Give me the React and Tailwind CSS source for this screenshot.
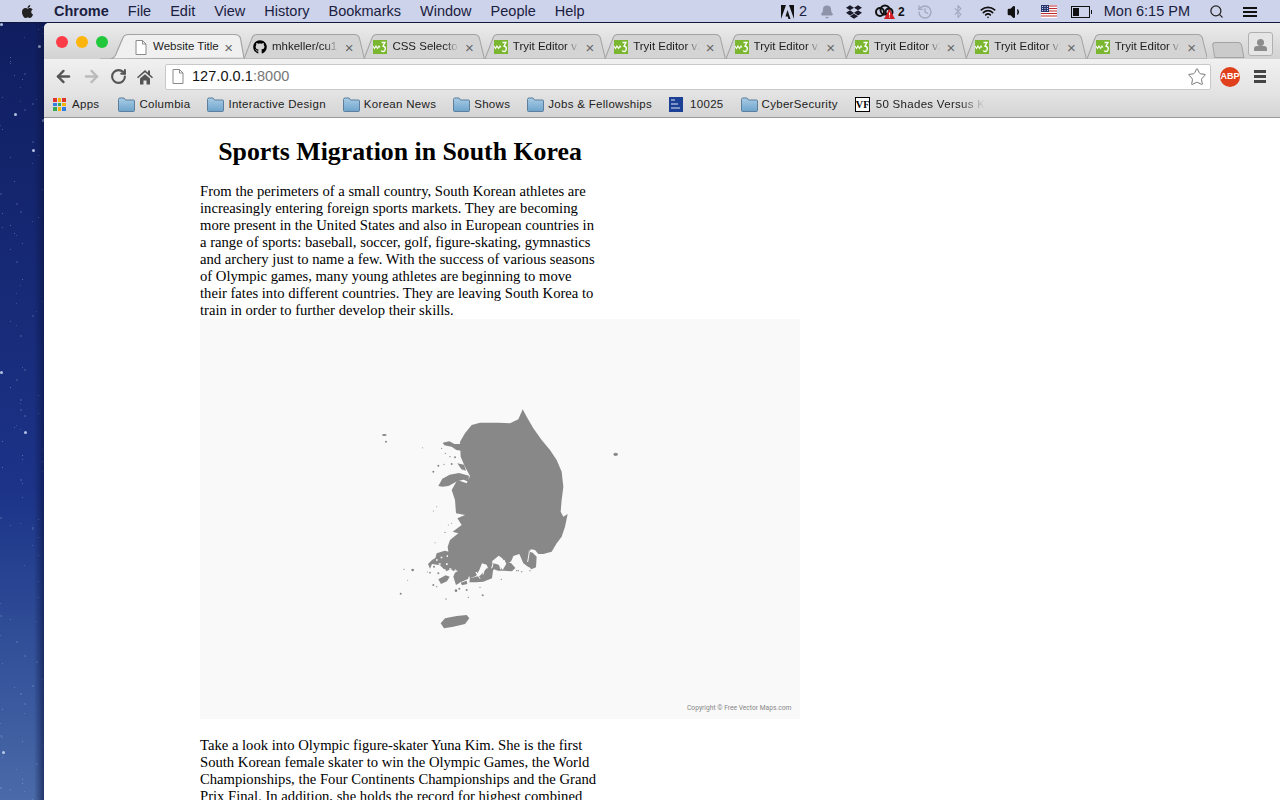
import React from 'react';
import { ArrowLeft, ArrowRight, RotateCw, Star, Search, Wifi, Volume1, Bell, Bluetooth, History } from 'lucide-react';
import { FaApple, FaGithub, FaDropbox } from 'react-icons/fa';

const menuItems = ['File', 'Edit', 'View', 'History', 'Bookmarks', 'Window', 'People', 'Help'];
const tabs = [
  { title: 'mhkeller/cu1', icon: 'gh' },
  { title: 'CSS Selector', icon: 'w3' },
  { title: 'Tryit Editor v2', icon: 'w3' },
  { title: 'Tryit Editor v2', icon: 'w3' },
  { title: 'Tryit Editor v2', icon: 'w3' },
  { title: 'Tryit Editor v2', icon: 'w3' },
  { title: 'Tryit Editor v2', icon: 'w3' },
  { title: 'Tryit Editor v2', icon: 'w3' },
];

// scattered stars for the wallpaper strip
const stars = Array.from({ length: 120 }, (_, i) => ({
  x: (i * i * 7 + i * 13) % 44,
  y: (i * 61 + i * i * 3) % 778,
  size: i % 17 === 0 ? 3 : i % 4 === 0 ? 2 : 1,
  alpha: i % 17 === 0 ? 0.85 : 0.2 + (i % 4) * 0.08,
}));

// small island specks around the coast, in map coordinates
const specks = [
  [128,510,4],[102,508,2],[92,581,3],[228,597,2],[295,592,2],[113,541,1.5],[445,512,2],[480,512,2],[394,538,2],
  [195,428,1.5],[225,397,2],[190,333,1.5],[200,320,1.5],[180,518,2.5],[172,516,1.5],[192,500,3],[205,520,3],
  [190,555,3],[200,560,2],[258,572,4],[268,566,3],[290,570,3],[338,586,3],[330,562,2],[440,512,2],[455,515,2],
  [190,215,3],[205,197,3],[222,193,2],[245,192,3],[215,145,2],[240,170,2],[226,160,2],[255,172,3],[235,375,1.5],[245,370,1.5],
];

const FileIcon = () => (
  <svg width="12" height="15" viewBox="0 0 12 15" className="shrink-0">
    <path d="M1 .5h6.500l3.500 3.500v10.500h-10z" fill="#fff" stroke="#8a8a8a" />
    <path d="M7.500 .5v3.500h3.500" fill="none" stroke="#8a8a8a" />
  </svg>
);

// w3schools favicon
const W3Icon = () => (
  <svg width="14" height="14" viewBox="0 0 14 14" className="shrink-0">
    <rect width="14" height="14" fill="#7ab62f" />
    <path d="M0 6l1.500 2.500 1.500-2.500 1.500 2.500 1.500-2.500 1 1.500" fill="none" stroke="#fff" strokeWidth="1.100" />
    <path d="M8.500 2.500h3.500l-2 3.500q2.500 .5 2.300 3 -.3 2.500-2.300 2.500 -1.300 0-1.800-1" fill="none" stroke="#fff" strokeWidth="1.300" />
  </svg>
);

const Folder = () => (
  <svg width="17" height="15" viewBox="0 0 17 15" className="shrink-0">
    <defs>
      <linearGradient id="fold" x1="0" y1="0" x2="0" y2="1">
        <stop offset="0" stopColor="#a9cde6" />
        <stop offset="1" stopColor="#6ea3cb" />
      </linearGradient>
    </defs>
    <path d="M.5 2.500q0-1.500 1.500-1.500h4l1.500 2h8q1 0 1 1v9.500q0 1-1 1h-14q-1 0-1-1z" fill="url(#fold)" stroke="#5b7f9c" />
  </svg>
);

const Tab = ({ title, icon, active }) => (
  <div className={`relative flex items-center h-[25px] shrink-0 pt-[1px] ${active ? 'w-[144px] pl-[35px] pr-[11px]' : 'w-[120.400px] pl-[9px] pr-[11px]'}`}>
    <svg className="absolute inset-0 w-full h-full" viewBox="0 0 120 25" preserveAspectRatio="none">
      {active
        ? <path d="M0 25h8q3 0 5-4l6-17q1-3.500 5-3.500h88q4 0 5 3.500l3 20h0z" fill="#f0f0f0" stroke="#a3a3a3" />
        : <path d="M0 25l8-21q1-3.500 5-3.500h97q4 0 5 3.500l5 21z" fill="#d4d4d4" stroke="#a3a3a3" />}
    </svg>
    <div className="relative flex items-center w-full gap-[2px]">
      {icon === 'file' && <FileIcon />}
      {icon === 'gh' && <FaGithub className="w-[14px] h-[14px] shrink-0 text-black" />}
      {icon === 'w3' && <W3Icon />}
      <span className={`flex-1 min-w-0 ml-[3px] whitespace-nowrap text-[11.500px] text-[#1c1c1c] ${active ? 'pl-[1px]' : '[mask-image:linear-gradient(to_right,black_78%,transparent_98%)]'}`}>{title}</span>
      <span className="ml-[3px] text-[15px] leading-none text-[#666]">×</span>
    </div>
  </div>
);

const Bookmark = ({ label, icon, gap = 'gap-[4px]', fade, extra = '' }) => (
  <div className={`flex items-center shrink-0 text-[11.500px] text-[#222] tracking-[0.3px] ${gap} ${extra}`}>
    {icon}
    <span className={`whitespace-nowrap ${fade ? '[mask-image:linear-gradient(to_right,black_75%,transparent_97%)]' : ''}`}>{label}</span>
  </div>
);

const AppsIcon = () => {
  const colors = ['#e0352b', '#f5b400', '#e0352b', '#2f7de1', '#34a853', '#f5b400', '#34a853', '#f5b400', '#2f7de1'];
  return (
    <div className="grid grid-cols-3 gap-px w-[13px] h-[13px] shrink-0">
      {colors.map((c, i) => <span key={i} className="w-[3.500px] h-[3.500px]" style={{ backgroundColor: c }} />)}
    </div>
  );
};

const WeatherIcon = () => (
  <svg width="14" height="15" viewBox="0 0 14 15" className="shrink-0">
    <rect width="14" height="15" fill="#1c4096" />
    <path d="M2 3h4M2 7h7M2 11h9" stroke="#dfe7f7" strokeWidth="1.200" />
  </svg>
);

const HomeIcon = () => (
  <svg width="16" height="16" viewBox="0 0 16 16" className="ml-[10px] shrink-0">
    <path d="M8 1l3 2.700v-2.200h2v4l3 2.800-1 1-7-6-7 6-1-1z" fill="#555" />
    <path d="M3 9.500l5-4.300 5 4.300v6h-3.500v-4h-3v4h-3.500z" fill="#555" />
  </svg>
);

const SouthKoreaMap = () => (
  <svg width="260" height="240" viewBox="0 0 780 720" className="block blur-[0.3px]" fill="#888888">
    <path d="M458 28 470 50 490 85 515 120 540 150 560 180 575 215 580 260 575 300 572 335 580 350 593 342 585 380 575 410 560 430 545 455 520 462 505 462 495 450 482 448 478 460 484 490 476 502 460 490 448 462 430 468 424 484 410 492 396 474 386 467 366 484 372 508 360 520 350 494 336 490 328 510 318 528 292 538 275 545 258 555 250 530 258 510 240 490 233 440 240 420 265 400 248 395 275 375 262 355 285 345 258 340 255 300 245 270 262 240 290 250 300 228 285 200 272 170 270 125 285 100 305 75 330 68 385 68 420 70 445 58 455 35z" />
    <path d="M478 452l-5 34M450 476l8 26M402 480l8 24M372 484l-10 30M345 498l-6 26M318 516l12 20M298 530l-6 20M270 547l8 10M262 512l-18 10M490 470l-8 14M428 478l-6 18M388 490l4 18M332 510l-10 14" fill="none" stroke="#f9f9f9" strokeWidth="3.500" />
    <path d="M212 670l13-15 35-7 30-3 8 10-13 17-35 8-28 5z" />
    <ellipse cx="737" cy="163" rx="7" ry="5" />
    <ellipse cx="43" cy="105" rx="7" ry="3" />
    <circle cx="48" cy="125" r="3" />
    <circle cx="158" cy="143" r="1.500" />
    <path d="M218 128l20-4 15 8 20 0 2 20-16-2-14-10-22-4z" />
    <path d="M205 258l12-22 22-12 28-5 30 8-2 18-14-6-18 4-22 12-6 3-18 2z" />
    <path d="M262 190l20 4 6 18-14-4z" />
    <path d="M200 460l24-8 16 4 4 30 18 10-10 18-10-6-14 6-18-18-24-4-6 14-6-14 12-12 10-6z" />
    <path d="M205 538l22-12 12 4-8 14-18 8z" />
    <path d="M212 470l5 0 0 5-5 0zM228 490l5 0 0 5-5 0zM206 490l6 0 0 4-6 0zM238 505l6 0 0 4-6 0zM222 508l5 0 0 5-5 0zM198 478l5 0 0 4-5 0zM230 466l4 0 0 5-4 0z" fill="#f9f9f9" />
    <path d="M272 548l18-6 2 10-16 4z" />
    <path d="M300 535l30-8 20-22 20 0-4 30-26 10-22 2-20 0z" />
    <path d="M370 490l16 4 12 16 14-24 12 4 12 14-10 10-24-2-18 0-16-6z" />
    <path d="M460 470l14-16 14 4 12 12-2 32-14 6-16-16z" />
    <path d="M345 498l-6 26M318 516l12 20M388 490l4 18M478 456l-5 30" fill="none" stroke="#f9f9f9" strokeWidth="3" />
    {specks.map(([cx, cy, r], i) => <circle key={i} cx={cx} cy={cy} r={r} />)}
  </svg>
);

export default function App() {
  return (
    <div className="w-[1280px] h-[800px] overflow-hidden flex flex-col bg-[#0e1f66] font-['Liberation_Sans',sans-serif]">
      {/* menu bar */}
      <div className="h-[23px] shrink-0 flex items-center pt-[1px] bg-[#cdd3ea] border-b border-[#10193c] text-[14.500px] text-[#1a2040]">
        <FaApple className="ml-[20px] w-[15px] h-[15px] text-[#222]" />
        <span className="ml-[19px] font-bold">Chrome</span>
        <div className="flex ml-[19px] gap-[19px]">
          {menuItems.map((m) => <span key={m}>{m}</span>)}
        </div>
        <div className="ml-auto flex items-center text-[#1a2040]">
          <svg width="13" height="14" viewBox="0 0 13 14">
            <path d="M0 0h5l-5 14zM8 0h5v14zM6.500 5l3 9h-2l-.8-2.500h-2.200z" fill="#111" />
          </svg>
          <span className="ml-[5px]">2</span>
          <Bell className="ml-[13px] w-[14px] h-[14px] text-[#8d93a8]" fill="#8d93a8" />
          <FaDropbox className="ml-[12px] w-[16px] h-[16px] text-[#1a1a2a]" />
          <svg width="22" height="15" viewBox="0 0 22 15" className="ml-[12px]">
            <circle cx="6" cy="8" r="4" fill="none" stroke="#111" strokeWidth="2" />
            <circle cx="11" cy="6" r="4.500" fill="none" stroke="#111" strokeWidth="2" />
            <circle cx="15" cy="8" r="3.500" fill="none" stroke="#111" strokeWidth="2" />
            <path d="M15.500 5l5.500 10h-11z" fill="#d11f26" />
            <path d="M15.500 8.500v3M15.500 12.500v1" stroke="#fff" />
          </svg>
          <span className="ml-[2px] font-bold text-[12px] text-[#111]">2</span>
          <History className="ml-[12px] w-[16px] h-[16px] text-[#a2a8bd]" />
          <Bluetooth className="ml-[18px] w-[14px] h-[15px] text-[#a2a8bd]" />
          <Wifi className="ml-[14px] w-[18px] h-[16px] text-[#111]" strokeWidth={2.500} />
          <Volume1 className="ml-[10px] w-[16px] h-[16px] text-[#111]" fill="#111" />
          <svg width="16" height="13" viewBox="0 0 16 13" className="ml-[18px]">
            <rect width="16" height="13" fill="#fff" />
            <path d="M0 1h16M0 3.500h16M0 6h16M0 8.500h16M0 11h16" stroke="#c0282d" strokeWidth="1.200" />
            <rect width="8" height="7" fill="#27346f" />
            <path d="M1 1.500h1M3.500 1.500h1M6 1.500h1M1 3.500h1M3.500 3.500h1M6 3.500h1M1 5.500h1M3.500 5.500h1M6 5.500h1" stroke="#cfd6ee" />
          </svg>
          <div className="ml-[14px] flex items-center">
            <div className="w-[19px] h-[12px] border border-[#111] p-px"><div className="w-[6px] h-full bg-[#111]" /></div>
            <div className="w-px h-[4px] bg-[#111] ml-px" />
          </div>
          <span className="ml-[12px]">Mon 6:15 PM</span>
          <Search className="ml-[19px] w-[15px] h-[15px] text-[#222]" />
          <div className="ml-[15px] mr-[23px] w-[18px] flex flex-col gap-[2px]">
            <div className="h-[2px] ml-[4px] bg-[#111]" /><div className="h-[2px] ml-[4px] bg-[#111]" /><div className="h-[2px] ml-[4px] bg-[#111]" />
          </div>
        </div>
      </div>

      <div className="flex-1 min-h-0 flex">
        {/* wallpaper */}
        <div className="relative w-[44px] shrink-0 overflow-hidden bg-gradient-to-b from-[#101e60] via-[#1c3388] via-60% to-[#4a6aa8]">
          {stars.map((s, i) => (
            <span
              key={i}
              className="absolute rounded-full bg-[#cfdcf5]"
              style={{ left: s.x, top: s.y, width: s.size, height: s.size, opacity: s.alpha }}
            />
          ))}
          <div className="absolute inset-y-0 right-0 w-[10px] bg-gradient-to-r from-transparent to-[#0a1440]/60" />
        </div>

        {/* browser window */}
        <div className="flex-1 min-w-0 flex flex-col bg-white overflow-hidden rounded-tl-[5px]">
          {/* tab strip */}
          <div className="h-[36px] shrink-0 flex items-end bg-gradient-to-b from-[#ececec] to-[#d2d2d2] relative">
            <div className="absolute left-[12px] top-[13px] flex gap-[8px]">
              <span className="w-[12px] h-[12px] rounded-full bg-[#fc3d48]" />
              <span className="w-[12px] h-[12px] rounded-full bg-[#fdb50e]" />
              <span className="w-[12px] h-[12px] rounded-full bg-[#22c83c]" />
            </div>
            <div className="flex items-end ml-[56px]">
              <Tab title="Website Title" icon="file" active />
              {tabs.map((t, i) => <Tab key={i} {...t} />)}
              <div className="ml-[6px] w-[30px] h-[16px] mb-[1px] bg-[#cbcbcb] border border-[#a3a3a3] rounded-t-[4px] skew-x-[10deg]" />
            </div>
            <div className="absolute right-[7px] top-[9px] w-[25px] h-[24px] rounded-[3px] border border-[#b0b0b0] bg-[#e6e6e6] flex flex-col items-center justify-end pb-[4px]">
              <span className="w-[7px] h-[7px] rounded-full bg-[#8c8c8c]" />
              <span className="w-[13px] h-[5px] rounded-t-[3px] bg-[#8c8c8c]" />
            </div>
          </div>

          {/* toolbar */}
          <div className="h-[33px] shrink-0 flex items-center pt-[2px] bg-gradient-to-b from-[#f0f0f0] to-[#e4e4e4] pl-[10px]">
            <ArrowLeft className="w-[19px] h-[19px] text-[#555]" strokeWidth={3} />
            <ArrowRight className="ml-[9px] w-[19px] h-[19px] text-[#bbb]" strokeWidth={3} />
            <RotateCw className="ml-[9px] w-[17px] h-[17px] text-[#555]" strokeWidth={3} />
            <HomeIcon />
            <div className="ml-[12px] w-[1046px] h-[26px] flex items-center bg-white border border-[#c8c8c8] rounded-[2px] pl-[6px] pr-[3px]">
              <FileIcon />
              <span className="ml-[8px] text-[14.500px] tracking-[0.05px] text-[#111]">127.0.0.1<span className="text-[#777]">:8000</span></span>
              <Star className="ml-auto w-[20px] h-[20px] text-[#777]" strokeWidth={1.200} />
            </div>
            <span className="ml-[9px] w-[20px] h-[20px] bg-[#e0401c] rounded-full text-white text-[9px] font-bold flex items-center justify-center">ABP</span>
            <div className="ml-[14px] w-[12px] flex flex-col gap-[2px]">
              <div className="h-[3px] bg-[#444]" /><div className="h-[3px] bg-[#444]" /><div className="h-[3px] bg-[#444]" />
            </div>
          </div>

          {/* bookmarks */}
          <div className="h-[26px] shrink-0 flex items-center gap-[17px] pl-[9px] bg-gradient-to-b from-[#e4e4e4] to-[#d4d4d4] border-b border-[#9a9a9a]">
            <Bookmark label="Apps" icon={<AppsIcon />} gap="gap-[6px]" extra="pr-[2px]" />
            <Bookmark label="Columbia" icon={<Folder />} />
            <Bookmark label="Interactive Design" icon={<Folder />} />
            <Bookmark label="Korean News" icon={<Folder />} />
            <Bookmark label="Shows" icon={<Folder />} />
            <Bookmark label="Jobs &amp; Fellowships" icon={<Folder />} />
            <Bookmark label="10025" icon={<WeatherIcon />} gap="gap-[7px]" />
            <Bookmark label="CyberSecurity" icon={<Folder />} />
            <Bookmark
              label="50 Shades Versus Ki"
              gap="gap-[6px]"
              fade
              icon={<span className="w-[15px] h-[15px] shrink-0 bg-white border border-black text-[10px] font-bold leading-[13px] text-center font-['Liberation_Serif',serif] text-black">VF</span>}
            />
          </div>

          {/* page */}
          <div className="flex-1 min-h-0 overflow-hidden bg-white pl-[156px] font-['Liberation_Serif',serif] text-black">
            <h1 className="w-[400px] mt-[18px] text-center text-[25.800px] leading-[32px] font-bold">Sports Migration in South Korea</h1>
            <p className="w-[400px] mt-[15px] text-[14.650px] leading-[17px]">
              From the perimeters of a small country, South Korean athletes are increasingly entering foreign sports markets. They are becoming more present in the United States and also in European countries in a range of sports: baseball, soccer, golf, figure-skating, gymnastics and archery just to name a few. With the success of various seasons of Olympic games, many young athletes are beginning to move their fates into different countries. They are leaving South Korea to train in order to further develop their skills.
            </p>
            <div className="w-[600px] h-[400px] bg-[#f9f9f9] pt-[81px] pl-[170px]">
              <SouthKoreaMap />
              <div className="mt-[64px] ml-[317px] whitespace-nowrap text-[6.700px] leading-[8px] text-[#888] font-['Roboto',sans-serif]">Copyright © Free Vector Maps.com</div>
            </div>
            <p className="w-[400px] mt-[18px] text-[14.650px] leading-[17px]">
              Take a look into Olympic figure-skater Yuna Kim. She is the first South Korean female skater to win the Olympic Games, the World Championships, the Four Continents Championships and the Grand Prix Final. In addition, she holds the record for highest combined
            </p>
          </div>
        </div>
      </div>
    </div>
  );
}
